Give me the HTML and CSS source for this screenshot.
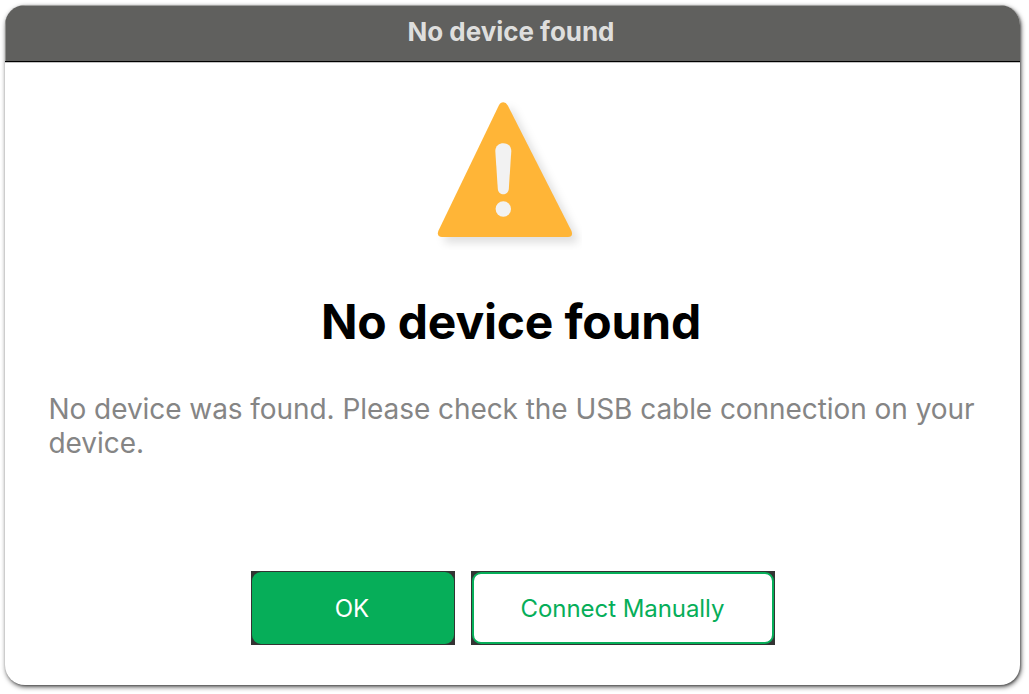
FILE: index.html
```html
<!DOCTYPE html>
<html lang="en">
<head>
<meta charset="utf-8">
<title>No device found</title>
<link rel="stylesheet" href="styles.css">
</head>
<body>
<main class="dialog">
  <header class="titlebar"><span class="titlebar-text">No device found</span></header>
  <section class="content">
    <svg class="warning" viewBox="0 0 160 160" aria-hidden="true">
      <path class="triangle" d="M76.800 15.500 Q78.500 12.300 81.300 12.300 Q84 12.300 85.800 15.500 L149.500 141 Q151.500 147 146 147 H20 Q14.500 147 16.300 141 Z"/>
      <path class="mark" d="M73.300 61 C73.300 50.500 89.300 50.500 89.300 61 L86.800 99 C86 106 76.500 106 75.800 99 Z"/>
      <circle class="mark" cx="81.300" cy="119" r="7.700"/>
    </svg>
    <h1 class="heading">No device found</h1>
    <p class="message">No device was found. Please check the USB cable connection on your device.</p>
    <div class="actions">
      <div class="frame frame-ok"><button class="button primary">OK</button></div>
      <div class="frame frame-connect"><button class="button secondary">Connect Manually</button></div>
    </div>
  </section>
</main>
</body>
</html>
```
FILE: styles.css
```css
* { box-sizing: border-box; }
body { margin: 0; padding: 5px 0 0 5px; height: 694px; background: #fff; font-family: Inter, "Liberation Sans", sans-serif; }
.dialog { width: 1015px; height: 680px; background: #fff; border-radius: 20px; overflow: hidden; box-shadow: 1px 2px 5px rgba(0,0,0,.65), 1px 1px 2px rgba(0,0,0,.3); }
.titlebar { height: 58px; background: #60605e; border-top: 1px solid #a0a09e; border-bottom: 1px solid #c4c4c4; box-shadow: inset 0 -1px #000, inset 1px 0 #90908e; color: #dededd; font-size: 26px; font-weight: 700; line-height: 52px; text-align: center; letter-spacing: -.03px; padding-right: 3px; }
.content { display: flex; flex-direction: column; align-items: center; }
.warning { width: 160px; height: 160px; margin: 27px 21px 0 0; }
.triangle { fill: #ffb537; filter: drop-shadow(6px 6px 4px rgba(0,0,0,.12)); }
.mark { fill: #f2f2f2; }
.heading { margin: 42px 3px 0 0; color: #000; font-size: 48px; line-height: 60px; font-weight: 700; letter-spacing: -.19px; white-space: nowrap; }
.message { width: 930px; margin: 40px 0 0 2px; color: #858585; font-size: 28px; line-height: 34px; letter-spacing: -.06px; }
.actions { display: flex; gap: 16px; margin-top: 111px; }
.frame { height: 74px; background: #333; padding: 1px; }
.frame-ok { width: 204px; }
.frame-connect { width: 304px; }
.button { display: block; width: 100%; height: 100%; padding: 0; border: 0; border-radius: 9px; font: 24px Inter, sans-serif; }
.primary { background: #06ae59; color: #fff; padding-right: 1px; }
.secondary { background: #fff; color: #06ae59; border: 2px solid #06ae59; letter-spacing: -.06px; }
```
